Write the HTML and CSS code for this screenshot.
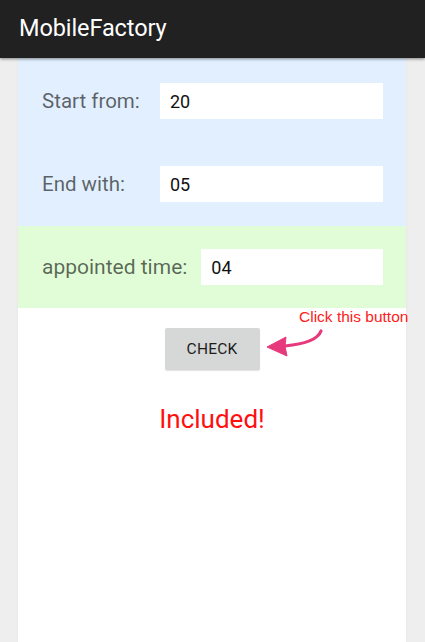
FILE: index.html
```html
<!DOCTYPE html>
<html>
<head>
<meta charset="utf-8">
<link rel="stylesheet" href="styles.css">
</head>
<body>
<header class="appbar"><h1 class="title">MobileFactory</h1></header>
<main class="column">
  <section class="range">
    <div class="row">
      <label class="label fixed">Start from:</label>
      <div class="field">20</div>
    </div>
    <div class="row">
      <label class="label fixed">End with:</label>
      <div class="field">05</div>
    </div>
  </section>
  <section class="appoint">
    <div class="row">
      <label class="label">appointed time:</label>
      <div class="field">04</div>
    </div>
  </section>
  <div class="action">
    <button class="check">CHECK</button>
    <div class="note">
      <span class="note-text">Click this button</span>
      <svg class="arrow" width="70" height="40" viewBox="0 0 70 40">
        <path d="M60 12 C 57 20, 45 25, 24 27" fill="none" stroke="#e63a7c" stroke-width="3.2" stroke-linecap="round"/>
        <path d="M6 28 L 25 18 L 24 27 L 26 37 Z" fill="#e63a7c" stroke="#e63a7c" stroke-width="1" stroke-linejoin="round"/>
      </svg>
    </div>
  </div>
  <p class="result">Included!</p>
</main>
</body>
</html>
```
FILE: styles.css
```css
html, body {
  margin: 0;
  padding: 0;
  height: 100%;
}
body {
  background: #eeeeee;
  font-family: Roboto, "Noto Sans", sans-serif;
  overflow: hidden;
}
.appbar {
  height: 58px;
  background: #212121;
  box-shadow: 0 1px 3px rgba(0,0,0,0.45);
  position: relative;
  z-index: 2;
  display: flex;
  align-items: center;
  padding-left: 19px;
  box-sizing: border-box;
}
.title {
  margin: 0;
  color: #ffffff;
  font-size: 23.5px;
  font-weight: 400;
  letter-spacing: -0.1px;
  padding-bottom: 2px;
}
.column {
  margin: 0 19px 0 18px;
  background: #ffffff;
  height: calc(100% - 58px);
  box-shadow: 0 0 2px rgba(0,0,0,0.06);
}
.range {
  background: #e1effe;
  padding: 25px 23px 24px 24px;
  display: flex;
  flex-direction: column;
  gap: 47px;
}
.appoint {
  background: #e1fdd7;
  padding: 23px 23px 23px 24px;
}
.row {
  display: flex;
  align-items: center;
}
.label {
  color: rgba(0,0,0,0.6);
  font-size: 20.5px;
  margin-right: 13px;
  white-space: nowrap;
}
.appoint .label {
  font-size: 21px;
  margin-right: 14px;
}
.label.fixed {
  width: 118px;
  margin-right: 0;
}
.field {
  flex: 1;
  height: 36px;
  background: #ffffff;
  box-sizing: border-box;
  padding-left: 10px;
  display: flex;
  align-items: center;
  font-size: 18px;
  color: #111;
}
.action {
  position: relative;
  display: flex;
  justify-content: center;
  padding-top: 20px;
}
.check {
  width: 95px;
  height: 42px;
  border: none;
  border-radius: 2px;
  background: #d6d7d7;
  color: #1e1e1e;
  font-family: Roboto, sans-serif;
  font-size: 15.5px;
  letter-spacing: 0.2px;
  padding: 0;
  box-shadow: 0 1px 1px rgba(0,0,0,0.12);
}
.note {
  position: absolute;
  left: 243px;
  top: 1px;
  width: 170px;
  height: 60px;
}
.note-text {
  position: absolute;
  left: 38px;
  top: -1px;
  font-family: "Liberation Sans", Arial, sans-serif;
  font-size: 15.5px;
  color: #ff2020;
  white-space: nowrap;
}
.arrow {
  position: absolute;
  left: 0;
  top: 10px;
}
.result {
  margin: 34px 0 0;
  text-align: center;
  color: #ff0f0f;
  font-size: 26px;
  line-height: 30px;
}
```
